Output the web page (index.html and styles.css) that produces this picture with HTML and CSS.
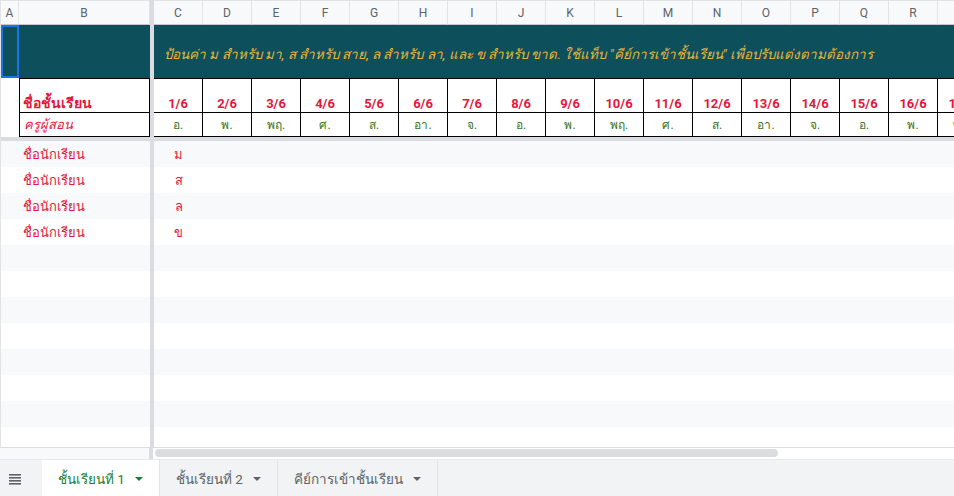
FILE: index.html
```html
<!DOCTYPE html>
<html lang="th">
<head>
<meta charset="utf-8">
<title>การเข้าชั้นเรียน</title>
<link rel="stylesheet" href="styles.css">
</head>
<body>
<div class="app">
  <div class="sheet">
    <div class="vdiv"></div>
    <div class="hdiv"></div>

    <div class="hd">A</div><div class="hd">B</div>
    <div class="hd">C</div><div class="hd">D</div><div class="hd">E</div><div class="hd">F</div><div class="hd">G</div><div class="hd">H</div><div class="hd">I</div><div class="hd">J</div><div class="hd">K</div><div class="hd">L</div><div class="hd">M</div><div class="hd">N</div><div class="hd">O</div><div class="hd">P</div><div class="hd">Q</div><div class="hd">R</div><div class="hd">S</div>

    <div class="teal sel"></div>
    <div class="teal"></div>
    <div class="teal note">ป้อนค่า ม สำหรับ มา, ส สำหรับ สาย, ล สำหรับ ลา, และ ข สำหรับ ขาด. ใช้แท็บ "คีย์การเข้าชั้นเรียน" เพื่อปรับแต่งตามต้องการ</div>

    <div class="blank"></div>
    <div class="title box first">ชื่อชั้นเรียน</div>
    <div class="date box">1/6</div><div class="date box">2/6</div><div class="date box">3/6</div><div class="date box">4/6</div><div class="date box">5/6</div><div class="date box">6/6</div><div class="date box">7/6</div><div class="date box">8/6</div><div class="date box">9/6</div><div class="date box">10/6</div><div class="date box">11/6</div><div class="date box">12/6</div><div class="date box">13/6</div><div class="date box">14/6</div><div class="date box">15/6</div><div class="date box">16/6</div><div class="date box">17/6</div>

    <div class="blank"></div>
    <div class="teacher box2 first">ครูผู้สอน</div>
    <div class="day box2">อ.</div><div class="day box2">พ.</div><div class="day box2">พฤ.</div><div class="day box2">ศ.</div><div class="day box2">ส.</div><div class="day box2">อา.</div><div class="day box2">จ.</div><div class="day box2">อ.</div><div class="day box2">พ.</div><div class="day box2">พฤ.</div><div class="day box2">ศ.</div><div class="day box2">ส.</div><div class="day box2">อา.</div><div class="day box2">จ.</div><div class="day box2">อ.</div><div class="day box2">พ.</div><div class="day box2">พฤ.</div>

    <div class="rh band"></div><div class="name band">ชื่อนักเรียน</div><div class="mark band">ม</div><div class="rest band"></div>
    <div class="rh"></div><div class="name">ชื่อนักเรียน</div><div class="mark">ส</div><div class="rest"></div>
    <div class="rh band"></div><div class="name band">ชื่อนักเรียน</div><div class="mark band">ล</div><div class="rest band"></div>
    <div class="rh"></div><div class="name">ชื่อนักเรียน</div><div class="mark">ข</div><div class="rest"></div>
    <div class="rh band"></div><div class="name band"></div><div class="mark band"></div><div class="rest band"></div>
    <div class="rh"></div><div class="name"></div><div class="mark"></div><div class="rest"></div>
    <div class="rh band"></div><div class="name band"></div><div class="mark band"></div><div class="rest band"></div>
    <div class="rh"></div><div class="name"></div><div class="mark"></div><div class="rest"></div>
    <div class="rh band"></div><div class="name band"></div><div class="mark band"></div><div class="rest band"></div>
    <div class="rh"></div><div class="name"></div><div class="mark"></div><div class="rest"></div>
    <div class="rh band"></div><div class="name band"></div><div class="mark band"></div><div class="rest band"></div>
    <div class="rh"></div><div class="name"></div><div class="mark"></div><div class="rest"></div>
  </div>

  <div class="hscroll">
    <div class="hs-left"></div>
    <div class="hs-div"></div>
    <div class="hs-track"><div class="thumb"></div></div>
  </div>

  <div class="tabs">
    <div class="allsheets">
      <svg width="12" height="11" viewBox="0 0 12 11"><rect x="0" y="0" width="12" height="1.6" fill="#5f6368"/><rect x="0" y="3" width="12" height="1.6" fill="#5f6368"/><rect x="0" y="6" width="12" height="1.6" fill="#5f6368"/><rect x="0" y="9" width="12" height="1.6" fill="#5f6368"/></svg>
    </div>
    <div class="tab active">ชั้นเรียนที่ 1<span class="caret"></span></div>
    <div class="tab">ชั้นเรียนที่ 2<span class="caret"></span></div>
    <div class="tab">คีย์การเข้าชั้นเรียน<span class="caret"></span></div>
  </div>
</div>
</body>
</html>
```

FILE: styles.css
```css
* { box-sizing: border-box; }
html, body { margin: 0; padding: 0; background: #fff; }
body { width: 954px; height: 496px; overflow: hidden; font-family: Roboto, "Noto Sans", Arial, sans-serif; }

.app { display: flex; flex-direction: column; width: 954px; height: 496px; }

.sheet {
  display: grid;
  grid-template-columns: 18px 131px 4px repeat(17, 49px);
  grid-template-rows: 25px 53px 35px 24px 4px repeat(12, 26px);
  width: 954px;
  height: 447px;
  overflow: hidden;
  flex: none;
  border-left: 1px solid #e2e3e3;
}

.vdiv { grid-column: 3; grid-row: 1 / -1; background: #dadce0; z-index: 2; }
.hdiv { grid-column: 1 / -1; grid-row: 5; background: #dadce0; z-index: 2; }

.hd {
  background: #f8f9fa;
  border-top: 1px solid #e2e3e3;
  border-right: 1px solid #e2e3e3;
  border-bottom: 1px solid #c4c7c5;
  color: #5f6368;
  font-size: 12px;
  display: flex; align-items: center; justify-content: center;
}

.teal { background: #0d4f5b; }
.sel { border: 2px solid #1a73e8; }
.note {
  grid-column: 4 / -1;
  color: #e8b63a;
  font-style: italic;
  font-size: 13.4px;
  white-space: nowrap;
  display: flex; align-items: center;
  padding-left: 10px;
  padding-top: 5px;
}

.blank { background: #fff; }

.box { border-top: 1px solid #000; border-right: 1px solid #000; border-bottom: 1px solid #000; }
.box2 { border-right: 1px solid #000; border-bottom: 1px solid #000; }
.first { border-left: 1px solid #000; }

.title {
  color: #e3173c; font-weight: bold; font-size: 14px;
  display: flex; align-items: flex-end; padding: 0 0 0 3px;
  line-height: 18px;
}
.date {
  color: #e3173c; font-weight: bold; font-size: 13px;
  display: flex; align-items: flex-end; justify-content: center; padding-bottom: 1px;
}
.teacher {
  color: #e3173c; font-style: italic; font-size: 13px;
  display: flex; align-items: center; padding-left: 4px;
}
.day {
  color: #38761d; font-size: 12px;
  display: flex; align-items: center; justify-content: center;
}

.rh, .name, .mark, .rest { background: #fff; }
.rest { grid-column: span 16; }
.rh.band, .name.band, .mark.band, .rest.band { background: #f8f9fa; }
.name { color: #e3173c; font-size: 13px; display: flex; align-items: center; padding-left: 4px; }
.mark { color: #e3173c; font-size: 13px; display: flex; align-items: center; justify-content: center; }

.hscroll {
  display: flex; height: 12px; flex: none;
  border-top: 1px solid #dadce0;
  background: #fff;
}
.hs-left { width: 149px; background: #f8f9fa; }
.hs-div { width: 4px; background: #dadce0; }
.hs-track { flex: 1; padding: 1px 2px 1px 2px; }
.thumb { width: 623px; height: 8px; background: #dadce0; border-radius: 4px; }

.tabs {
  flex: 1; display: flex; align-items: stretch;
  background: #f1f3f4;
  border-top: 1px solid #e8eaed;
}
.allsheets { width: 42px; display: flex; align-items: center; justify-content: center; padding-right: 17px; padding-left: 5px; padding-top: 2px; }
.tab {
  display: flex; align-items: center;
  padding: 2px 16px 0 16px;
  font-size: 13.5px; color: #5f6368;
  border-right: 1px solid #e3e5e8;
}
.tab.active { background: #fff; color: #188038; }
.caret {
  display: inline-block; margin-left: 10px;
  width: 0; height: 0;
  border-left: 4px solid transparent; border-right: 4px solid transparent;
  border-top: 4px solid #5f6368;
}
.tab.active .caret { border-top-color: #188038; }
```
